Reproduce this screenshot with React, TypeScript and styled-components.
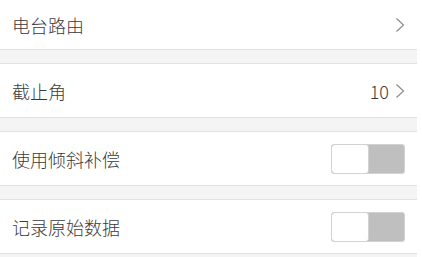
import React from 'react'
import styled, { createGlobalStyle } from 'styled-components'

const GlobalStyle = createGlobalStyle`
  html, body {
    margin: 0;
    padding: 0;
    background: #ffffff;
  }
  body {
    font-family: "Noto Sans CJK SC", "Noto Sans", sans-serif;
  }
`

const SettingsList = styled.div`
  width: 417px;
  height: 257px;
  background: #f4f4f4;
  display: flex;
  flex-direction: column;
  gap: 13px;
`

type RowProps = {
  $first?: boolean
}

const Row = styled.div<RowProps>`
  height: ${({ $first }) => ($first ? '49px' : '53px')};
  background: #ffffff;
  border-top: ${({ $first }) => ($first ? 'none' : '1px solid #e2e2e2')};
  border-bottom: 1px solid #e2e2e2;
  display: flex;
  align-items: center;
  justify-content: space-between;
  padding: 0 12px;
  flex-shrink: 0;
`

const Label = styled.span`
  font-size: 18px;
  font-weight: 300;
  color: #3a3a3a;
  line-height: 1;
`

const Trailing = styled.div`
  display: flex;
  align-items: center;
  gap: 6px;
`

const Value = styled.span`
  font-size: 18px;
  font-weight: 300;
  color: #3a3a3a;
  line-height: 1;
`

const ChevronSvg = styled.svg`
  width: 10px;
  height: 16px;
  display: block;
`

const Chevron = () => (
  <ChevronSvg viewBox="0 0 10 16">
    <polyline points="1.5,1.5 8.5,8 1.5,14.5" fill="none" stroke="#8c8c8c" strokeWidth="1.2" />
  </ChevronSvg>
)

type SwitchProps = {
  $on: boolean
}

const SwitchTrack = styled.div<SwitchProps>`
  width: 72px;
  height: 28px;
  border: 1px solid #d2d2d2;
  border-radius: 3px;
  background: #bfbfbf;
  display: flex;
  justify-content: ${({ $on }) => ($on ? 'flex-end' : 'flex-start')};
  overflow: hidden;
`

const SwitchKnob = styled.div`
  width: 36px;
  height: 28px;
  background: #ffffff;
  border-right: 1px solid #d2d2d2;
  border-radius: 3px;
`

const Toggle = ({ on }: { on: boolean }) => (
  <SwitchTrack $on={on}>
    <SwitchKnob />
  </SwitchTrack>
)

const App = () => (
  <>
    <GlobalStyle />
    <SettingsList>
      <Row $first>
        <Label>电台路由</Label>
        <Trailing>
          <Chevron />
        </Trailing>
      </Row>
      <Row>
        <Label>截止角</Label>
        <Trailing>
          <Value>10</Value>
          <Chevron />
        </Trailing>
      </Row>
      <Row>
        <Label>使用倾斜补偿</Label>
        <Toggle on={false} />
      </Row>
      <Row>
        <Label>记录原始数据</Label>
        <Toggle on={false} />
      </Row>
    </SettingsList>
  </>
)

export default App
